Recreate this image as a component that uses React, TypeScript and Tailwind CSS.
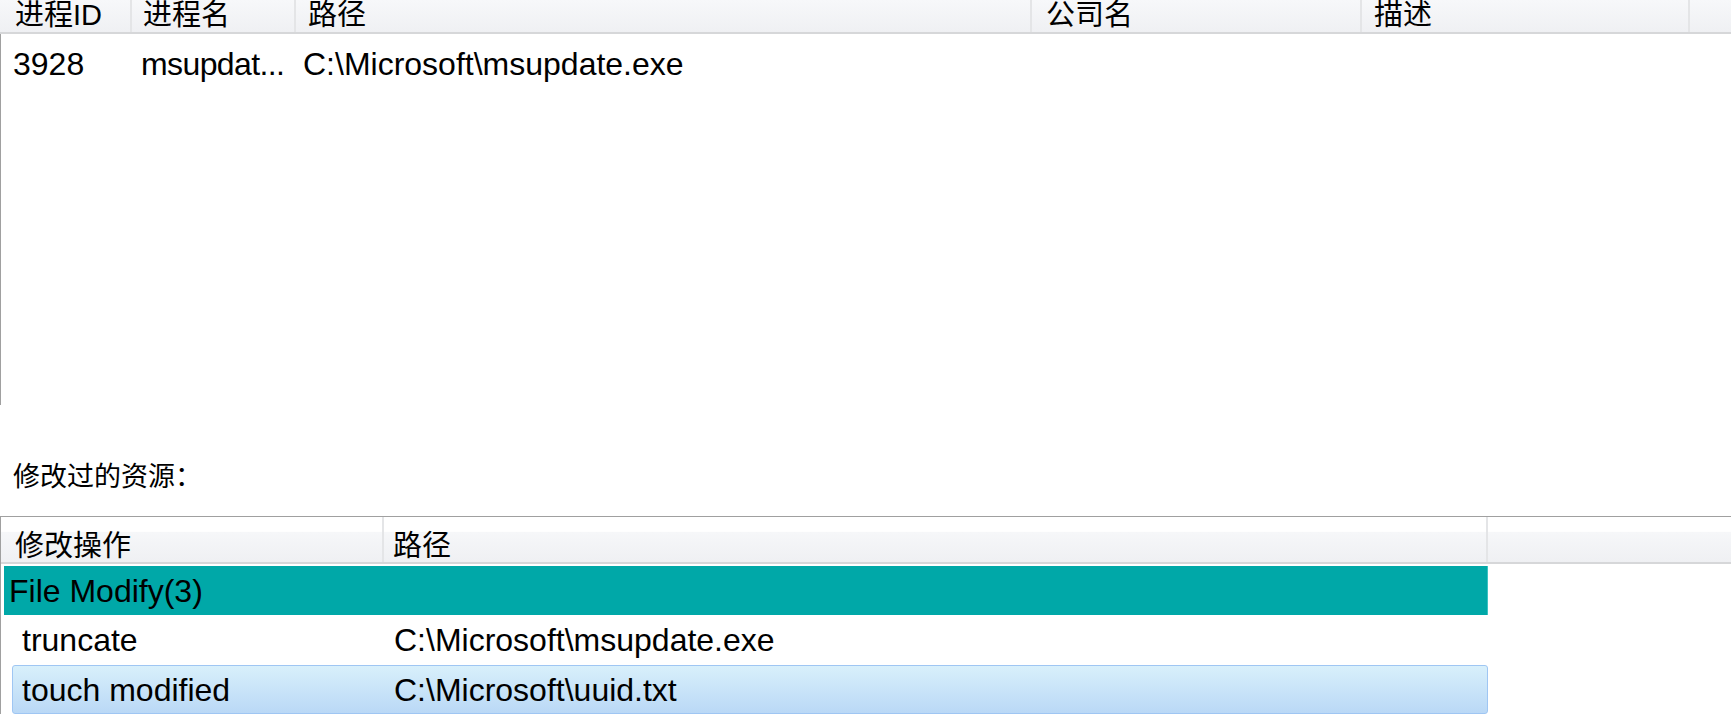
const font = { fontFamily: '"Liberation Sans", "Noto Sans CJK SC", sans-serif' };

const processCols = [
  { title: '进程ID', width: 'w-[132px]', pad: 'pl-[15px]' },
  { title: '进程名', width: 'w-[164px]', pad: 'pl-[11px]' },
  { title: '路径', width: 'w-[736px]', pad: 'pl-[12px]' },
  { title: '公司名', width: 'w-[330px]', pad: 'pl-[14px]' },
  { title: '描述', width: 'w-[328px]', pad: 'pl-[12px]' },
];

function ProcessTable() {
  return (
    <div className="h-[405px] flex flex-col">
      <div className="flex h-[34px] shrink-0 border-b-2 border-[#d6d7d9] bg-[linear-gradient(180deg,#f7f8fa,#eff0f3)]">
        {processCols.map((c) => (
          <div
            key={c.title}
            className={`${c.width} ${c.pad} shrink-0 border-r-2 border-[#e4e5e7] text-[29px] leading-[30px] text-black whitespace-nowrap overflow-hidden`}>
            {c.title}
          </div>
        ))}
        <div className="flex-1" />
      </div>
      <div className="flex-1 border-l border-[#a0a0a0]">
        <div className="flex h-[55px] items-center pt-[4px] text-[32px] text-black whitespace-nowrap">
          <div className="w-[131px] pl-[12px] shrink-0">3928</div>
          <div className="w-[164px] pl-[9px] shrink-0 overflow-hidden tracking-[-0.6px]">msupdat...</div>
          <div className="pl-[7px]">C:\Microsoft\msupdate.exe</div>
        </div>
      </div>
    </div>
  );
}

function ResourceTable() {
  return (
    <div className="border-t border-l border-[#a0a0a0]">
      <div className="flex h-[47px] border-b-2 border-[#d6d7d9] bg-[linear-gradient(180deg,#ffffff_0%,#ffffff_32%,#f6f7f9_34%,#eff0f3_100%)] text-[29px] text-black">
        <div className="w-[383px] shrink-0 pl-[14px] pt-[8px] border-r-2 border-[#e4e5e7]">修改操作</div>
        <div className="w-[1104px] shrink-0 pl-[9px] pt-[8px] border-r-2 border-[#e4e5e7]">路径</div>
        <div className="flex-1" />
      </div>
      <div className="pt-[2px] w-[1487px] text-[32px] text-black whitespace-nowrap">
        <div className="ml-[3px] h-[49px] flex items-center pl-[5px] bg-[#00a8a8] border-r border-[#3cc2c2]">
          File Modify(3)
        </div>
        <div className="h-[50px] flex items-center">
          <div className="w-[393px] pl-[21px] shrink-0">truncate</div>
          <div>C:\Microsoft\msupdate.exe</div>
        </div>
        <div className="ml-[11px] h-[49px] flex items-center rounded-[3px] border border-[#9fc6f3] bg-[linear-gradient(180deg,#d8f0fb,#bad8f6)]">
          <div className="w-[381px] pl-[9px] shrink-0">touch modified</div>
          <div>C:\Microsoft\uuid.txt</div>
        </div>
      </div>
    </div>
  );
}

export default function App() {
  return (
    <div className="w-[1731px] h-[716px] overflow-hidden bg-white" style={font}>
      <ProcessTable />
      <div className="h-[111px] flex items-center pl-[13px] pt-[34px] text-[27px] text-black">修改过的资源：</div>
      <ResourceTable />
    </div>
  );
}
